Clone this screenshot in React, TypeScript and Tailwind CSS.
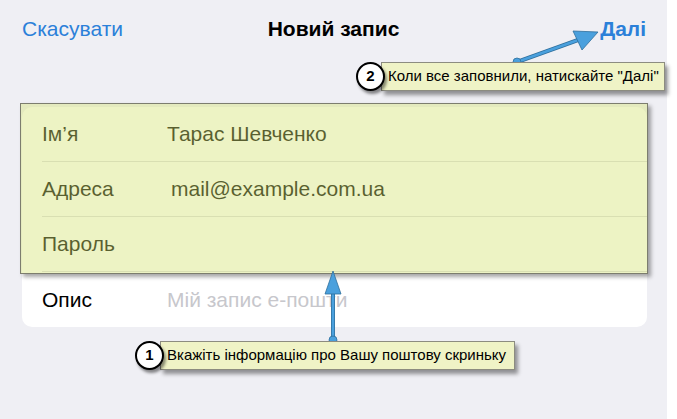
import React from "react";

// ── form rows ────────────────────────────────────────────────
const ROWS = [
  { label: "Ім’я", value: "Тарас Шевченко", muted: false, shift: false },
  { label: "Адреса", value: "mail@example.com.ua", muted: false, shift: true },
  { label: "Пароль", value: "", muted: false, shift: false },
  { label: "Опис", value: "Мій запис е-пошти", muted: true, shift: false },
];
// ─────────────────────────────────────────────────────────────

const SF = { fontFamily: "'Liberation Sans', Arial, sans-serif" };

function Callout({
  n,
  text,
  className,
  boxW,
}: {
  n: number;
  text: string;
  className: string;
  boxW: string;
}) {
  return (
    <div className={`absolute flex items-center ${className}`}>
      <div className="relative z-10 w-[29px] h-[29px] rounded-full bg-white border-2 border-black flex items-center justify-center text-[15px] font-bold text-black shadow-[2px_3px_3px_rgba(0,0,0,0.45)]">
        {n}
      </div>
      <div
        className={`-ml-[4px] h-[29px] flex items-center pl-[6px] bg-[#eff3c6] border border-[#8c8c80] text-[15px] text-black whitespace-nowrap shadow-[3px_4px_4px_rgba(0,0,0,0.4)] ${boxW}`}
      >
        {text}
      </div>
    </div>
  );
}

export default function App() {
  return (
    <div className="relative w-[677px] h-[419px] flex bg-white overflow-hidden" style={SF}>
      {/* iOS sheet */}
      <div className="w-[667px] h-full bg-[#efeff4] px-[22px] antialiased">
        <div className="h-[58px] grid grid-cols-[1fr_auto_1fr] items-center text-[21px]">
          <span className="text-[#2b80d9]">Скасувати</span>
          <span className="font-bold text-black">Новий запис</span>
          <span className="font-bold text-[#2b80d9] text-right mr-[-1px]">Далі</span>
        </div>

        <div className="mt-[49px] w-[625px] bg-white rounded-[10px] overflow-hidden">
          {ROWS.map((r, i) => (
            <div key={r.label} className="h-[55px] pl-[20px]">
              <div
                className={`h-full flex items-center text-[21px] ${
                  i < ROWS.length - 1 ? "border-b border-[#dcdce0]" : ""
                }`}
              >
                <span className="w-[125px] text-black">{r.label}</span>
                <span
                  className={`${r.muted ? "text-[#c7c7cc]" : "text-black"} ${
                    r.shift ? "ml-[4px]" : ""
                  }`}
                >
                  {r.value}
                </span>
              </div>
            </div>
          ))}
        </div>
      </div>

      {/* highlight over first three rows */}
      <div className="absolute left-[20px] top-[103px] w-[628px] h-[171px] border border-[#7c7d6e] bg-[rgba(212,226,114,0.42)] shadow-[3px_3px_4px_rgba(0,0,0,0.35)]" />

      {/* arrows */}
      <svg className="absolute inset-0" width="677" height="419" viewBox="0 0 677 419">
        {/* arrow 2 */}
        <line x1="517" y1="62" x2="578" y2="40" stroke="#2f6f9c" strokeWidth="4" />
        <line x1="517" y1="62" x2="578" y2="40" stroke="#4aa0dd" strokeWidth="2.5" />
        <path d="M598 32 L573 31 L582 50 Z" fill="#4aa0dd" stroke="#2f6f9c" strokeWidth="0.8" />
        <circle cx="517" cy="62" r="4" fill="#4aa0dd" stroke="#2f6f9c" strokeWidth="0.8" />
        {/* arrow 1 */}
        <line x1="333" y1="340" x2="333" y2="292" stroke="#2f6f9c" strokeWidth="4" />
        <line x1="333" y1="340" x2="333" y2="292" stroke="#4aa0dd" strokeWidth="2.5" />
        <path d="M333 271 L325 294 L341 294 Z" fill="#4aa0dd" stroke="#2f6f9c" strokeWidth="0.8" />
        <circle cx="333" cy="340" r="4" fill="#4aa0dd" stroke="#2f6f9c" strokeWidth="0.8" />
      </svg>

      <Callout
        n={2}
        text={'Коли все заповнили, натискайте "Далі"'}
        className="left-[356px] top-[62px]"
        boxW="w-[284px]"
      />
      <Callout
        n={1}
        text="Вкажіть інформацію про Вашу поштову скриньку"
        className="left-[135px] top-[341px]"
        boxW="w-[355px]"
      />
    </div>
  );
}
